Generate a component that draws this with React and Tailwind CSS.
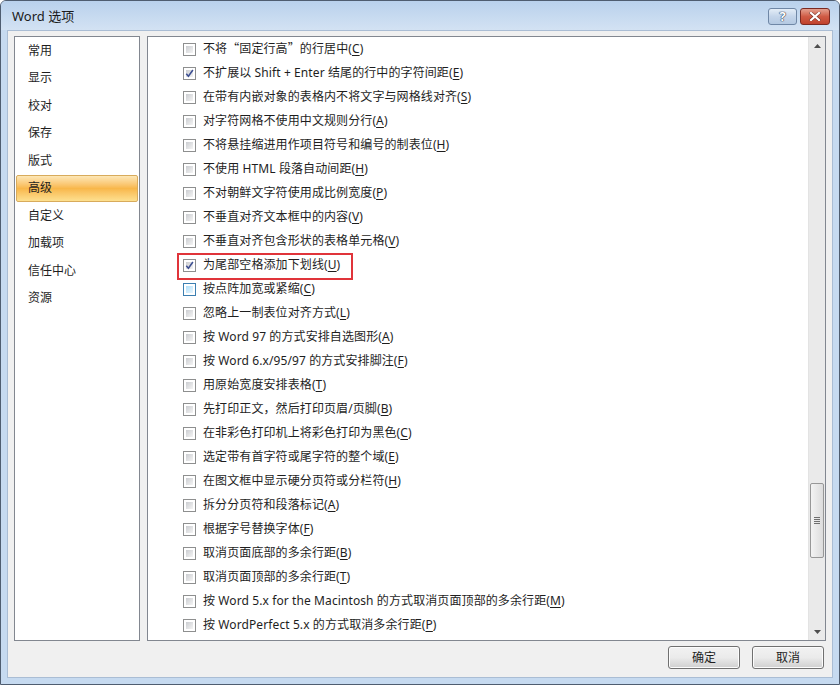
import React from "react";

const NAV = ["常用", "显示", "校对", "保存", "版式", "高级", "自定义", "加载项", "信任中心", "资源"];

const ROWS = [
  ["不将“固定行高”的行居中", "C"],
  ["不扩展以 Shift + Enter 结尾的行中的字符间距", "E", "checked"],
  ["在带有内嵌对象的表格内不将文字与网格线对齐", "S"],
  ["对字符网格不使用中文规则分行", "A"],
  ["不将悬挂缩进用作项目符号和编号的制表位", "H"],
  ["不使用 HTML 段落自动间距", "H"],
  ["不对朝鲜文字符使用成比例宽度", "P"],
  ["不垂直对齐文本框中的内容", "V"],
  ["不垂直对齐包含形状的表格单元格", "V"],
  ["为尾部空格添加下划线", "U", "checked", "boxed"],
  ["按点阵加宽或紧缩", "C", "hover"],
  ["忽略上一制表位对齐方式", "L"],
  ["按 Word 97 的方式安排自选图形", "A"],
  ["按 Word 6.x/95/97 的方式安排脚注", "F"],
  ["用原始宽度安排表格", "T"],
  ["先打印正文，然后打印页眉/页脚", "B"],
  ["在非彩色打印机上将彩色打印为黑色", "C"],
  ["选定带有首字符或尾字符的整个域", "E"],
  ["在图文框中显示硬分页符或分栏符", "H"],
  ["拆分分页符和段落标记", "A"],
  ["根据字号替换字体", "F"],
  ["取消页面底部的多余行距", "B"],
  ["取消页面顶部的多余行距", "T"],
  ["按 Word 5.x for the Macintosh 的方式取消页面顶部的多余行距", "M"],
  ["按 WordPerfect 5.x 的方式取消多余行距", "P"],
];

function Checkbox({ checked, hover }) {
  return (
    <div
      className={
        "w-[13px] h-[13px] shrink-0 border p-[2px] bg-white " +
        (hover ? "border-[#3c7fb1]" : "border-[#8e8f8f]")
      }
    >
      <div
        className={
          "relative w-full h-full " +
          (hover
            ? "bg-gradient-to-br from-[#b1dff9] to-[#e8f6fe]"
            : "bg-gradient-to-br from-[#cbcdd1] to-[#f4f4f4]")
        }
      >
        {checked && (
          <svg
            viewBox="0 0 9 9"
            className="absolute left-[-1px] top-[-1px] w-[9px] h-[9px]"
          >
            <path
              d="M1.3 4.8 L3.4 7.3 L7.9 1.0"
              fill="none"
              stroke="#3d4f92"
              strokeWidth="1.5"
            />
          </svg>
        )}
      </div>
    </div>
  );
}

function renderText(text) {
  // render CJK quotes with the CJK font so they are full width
  const parts = text.split(/([“”])/);
  return parts.map((p, i) =>
    p === "“" || p === "”" ? (
      <span key={i} className="font-['Noto_Sans_CJK_SC',sans-serif]">
        {p}
      </span>
    ) : (
      <React.Fragment key={i}>{p}</React.Fragment>
    )
  );
}

function Row({ text, key2, checked, hover, boxed }) {
  return (
    <div className="relative h-[24px] flex items-center pl-[35px]">
      <Checkbox checked={checked} hover={hover} />
      <span className="ml-[7px] -mt-[1px] text-[12px] leading-none text-[#1e1e1e] whitespace-nowrap tracking-[0.1px]">
        {renderText(text)}(<span className="underline underline-offset-2">{key2}</span>)
      </span>
      {boxed && (
        <div className="absolute left-[29px] top-0 w-[176px] h-[27px] border-2 border-[#e0343a]" />
      )}
    </div>
  );
}

function Arrow({ up }) {
  return (
    <div className="h-[17px] flex items-center justify-center">
      <svg width="7" height="4" viewBox="0 0 7 4">
        {up ? (
          <path d="M0 4 L3.5 0 L7 4 Z" fill="#4d4d4d" />
        ) : (
          <path d="M0 0 L3.5 4 L7 0 Z" fill="#4d4d4d" />
        )}
      </svg>
    </div>
  );
}

function Button({ children }) {
  return (
    <div className="w-[72px] h-[23px] rounded-[3px] border border-[#707070] bg-gradient-to-b from-[#f2f2f2] via-[#ebebeb] to-[#cfcfcf] flex items-center justify-center text-[12px] text-[#1e1e1e] shadow-[inset_0_0_0_1px_#fcfcfc]">
      {children}
    </div>
  );
}

export default function App() {
  return (
    <div className="w-[840px] h-[685px] flex flex-col border border-[#4f5d70] rounded-t-[6px] bg-[#c6daf0] font-['Noto_Sans','Noto_Sans_CJK_SC',sans-serif] overflow-hidden">
      {/* title bar */}
      <div className="h-[29px] shrink-0 flex items-center justify-between bg-gradient-to-b from-[#b9d1ec] to-[#d3e2f3] pl-[11px] pr-[9px]">
        <span className="text-[13px] text-[#1a1a1a] mt-[3px]">Word 选项</span>
        <div className="flex gap-[3px] mt-[2px]">
          <div className="w-[29px] h-[17px] rounded-[3px] border border-[#6f87a6] bg-gradient-to-b from-[#e4edf7] via-[#c4d5ea] to-[#b4c9e2] flex items-center justify-center">
            <span className="text-[13px] font-bold text-white leading-none [text-shadow:0_0_1px_#2b3b55,0_0_1px_#2b3b55,0_0_1px_#2b3b55]">?</span>
          </div>
          <div className="w-[30px] h-[17px] rounded-[3px] border border-[#7b2a22] bg-gradient-to-b from-[#e3a08f] via-[#cf5b45] to-[#c0412c] flex items-center justify-center">
            <svg width="12" height="9" viewBox="0 0 12 9">
              <path d="M2 1 L10 8 M10 1 L2 8" stroke="#3a1410" strokeWidth="3.2" strokeLinecap="square" opacity="0.55" />
              <path d="M2 1 L10 8 M10 1 L2 8" stroke="#ffffff" strokeWidth="2.2" strokeLinecap="square" />
            </svg>
          </div>
        </div>
      </div>

      {/* content */}
      <div className="mx-[6px] h-[648px] shrink-0 bg-[#f0f0f0] border border-[#aabdd4] flex flex-col">
        <div className="flex gap-[7px] pt-[5px] pl-[6px] pr-[6px]">
          {/* left nav */}
          <div className="w-[126px] h-[605px] border border-[#828790] bg-white px-[1px] flex flex-col">
            {NAV.map((n) =>
              n === "高级" ? (
                <div
                  key={n}
                  className="h-[27.5px] flex items-center pl-[11px] rounded-[2px] border border-[#d8ab5c] bg-gradient-to-b from-[#fde7b5] via-[#f8b74a] to-[#fde08f] text-[12px] text-[#1e1e1e]"
                >
                  {n}
                </div>
              ) : (
                <div key={n} className="h-[27.5px] flex items-center pl-[12px] text-[12px] text-[#1e1e1e]">
                  {n}
                </div>
              )
            )}
          </div>

          {/* right panel */}
          <div className="w-[679px] h-[605px] border border-[#828790] bg-white flex">
            <div className="flex-1 flex flex-col">
              {ROWS.map((r, i) => (
                <Row
                  key={i}
                  text={r[0]}
                  key2={r[1]}
                  checked={r.includes("checked")}
                  hover={r.includes("hover")}
                  boxed={r.includes("boxed")}
                />
              ))}
            </div>
            <div className="w-[17px] bg-[#eaeaea] border-l border-[#e3e3e3] flex flex-col">
              <Arrow up />
              <div className="flex-1 pt-[429px] px-[1px]">
                <div className="h-[75px] rounded-[2px] border border-[#979797] bg-gradient-to-r from-[#f3f3f3] to-[#dcdcdc] flex flex-col items-center justify-center gap-[1px]">
                  <div className="w-[6px] h-[1px] bg-[#6f6f6f]" />
                  <div className="w-[6px] h-[1px] bg-[#6f6f6f]" />
                  <div className="w-[6px] h-[1px] bg-[#6f6f6f]" />
                  <div className="w-[6px] h-[1px] bg-[#6f6f6f]" />
                </div>
              </div>
              <Arrow />
            </div>
          </div>
        </div>

        {/* buttons */}
        <div className="flex justify-end gap-[12px] pr-[8px] pt-[5px]">
          <Button>确定</Button>
          <Button>取消</Button>
        </div>
      </div>
    </div>
  );
}
